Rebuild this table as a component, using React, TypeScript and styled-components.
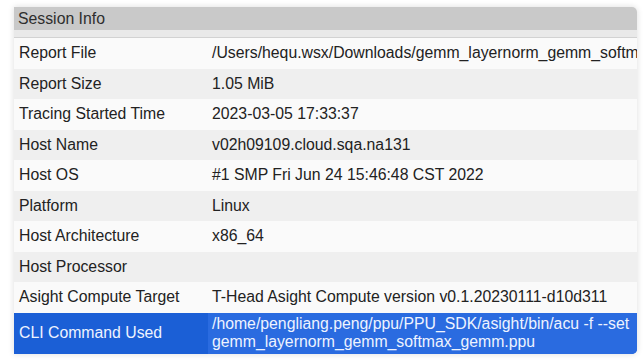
import React from "react";
import styled, { createGlobalStyle } from "styled-components";

const Global = createGlobalStyle`
  html, body { margin: 0; padding: 0; background: #ffffff; }
  body { font-family: "Liberation Sans", Arial, sans-serif; }
`;

const Page = styled.div`
  width: 643px;
  height: 363px;
  padding: 7px 6px 9px 14px;
  box-sizing: border-box;
  background: #ffffff;
`;

const Panel = styled.div`
  width: 623px;
  height: 347px;
  display: flex;
  flex-direction: column;
  background: #fafafa;
  border-radius: 0 5px 5px 0;
  overflow: hidden;
  box-shadow: 0 0 6px rgba(0, 0, 0, 0.14);
`;

const Header = styled.div`
  height: 23px;
  flex: none;
  display: flex;
  align-items: center;
  padding-left: 4px;
  background: #c9c9c9;
  color: #2e2e2e;
  font-size: 15.8px;
`;

const Spacer = styled.div`
  height: 7px;
  flex: none;
  background: #e9e9e9;
  border-bottom: 1px solid #d2d2d2;
`;

const Row = styled.div<{ $shade: "white" | "gray" | "selected"; $tall?: boolean }>`
  display: grid;
  grid-template-columns: 194px 1fr;
  height: ${(p) => (p.$tall ? "41px" : "30.5px")};
  flex: none;
  align-items: stretch;
  background: ${(p) =>
    p.$shade === "selected" ? "#1b5fd6" : p.$shade === "gray" ? "#efefef" : "#fafafa"};
  color: ${(p) => (p.$shade === "selected" ? "#eef3ff" : "#222222")};
  font-size: 15.8px;
  white-space: nowrap;
`;

const Label = styled.div`
  display: flex;
  align-items: center;
  padding-left: 5px;
  overflow: hidden;
`;

const Value = styled.div<{ $selected?: boolean }>`
  display: flex;
  flex-direction: column;
  justify-content: center;
  padding-left: 4px;
  overflow: hidden;
  line-height: 18px;
  background: ${(p) => (p.$selected ? "#2a6be0" : "transparent")};
`;

const rows: [string, string][] = [
  ["Report File", "/Users/hequ.wsx/Downloads/gemm_layernorm_gemm_softmax_gemm.ppu"],
  ["Report Size", "1.05 MiB"],
  ["Tracing Started Time", "2023-03-05 17:33:37"],
  ["Host Name", "v02h09109.cloud.sqa.na131"],
  ["Host OS", "#1 SMP Fri Jun 24 15:46:48 CST 2022"],
  ["Platform", "Linux"],
  ["Host Architecture", "x86_64"],
  ["Host Processor", ""],
  ["Asight Compute Target", "T-Head Asight Compute version v0.1.20230111-d10d311"],
];

export default function App() {
  return (
    <Page>
      <Global />
      <Panel>
        <Header>Session Info</Header>
        <Spacer />
        {rows.map(([k, v], i) => (
          <Row key={k} $shade={i % 2 === 0 ? "white" : "gray"}>
            <Label>{k}</Label>
            <Value>{v}</Value>
          </Row>
        ))}
        <Row $shade="selected" $tall>
          <Label>CLI Command Used</Label>
          <Value $selected>
            <span>/home/pengliang.peng/ppu/PPU_SDK/asight/bin/acu -f --set</span>
            <span>gemm_layernorm_gemm_softmax_gemm.ppu</span>
          </Value>
        </Row>
      </Panel>
    </Page>
  );
}
